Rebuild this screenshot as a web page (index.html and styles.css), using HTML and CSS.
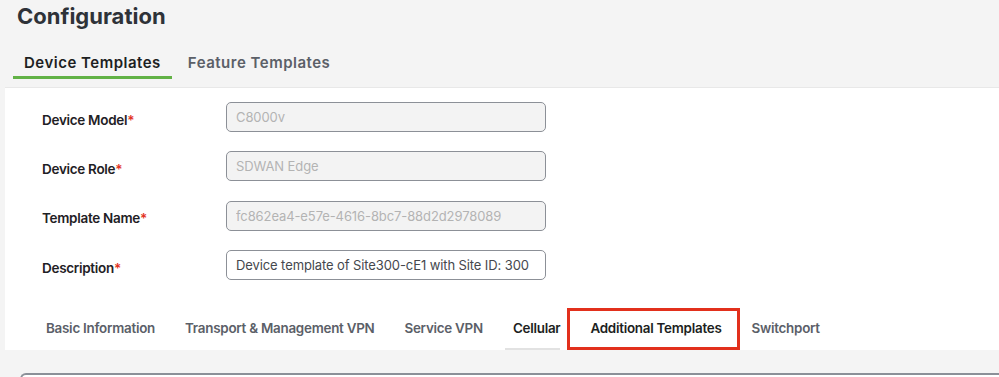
FILE: index.html
```html
<!DOCTYPE html>
<html lang="en">

<head>
    <meta charset="UTF-8">
    <meta name="viewport" content="width=device-width, initial-scale=1.0">
    <title>Configuration - Device Templates</title>
    <link rel="stylesheet" href="styles.css">
</head>

<body>
    <!-- Cabeçalho -->
    <header class="page-header">
        <h1 class="page-title">Configuration</h1>
        <nav class="top-tabs">
            <a href="#" class="top-tab active">Device Templates</a>
            <a href="#" class="top-tab">Feature Templates</a>
        </nav>
    </header>

    <!-- Formulário do template -->
    <main class="panel">
        <form class="template-form">
            <div class="form-row">
                <label for="device-model">Device Model<span class="req">*</span></label>
                <input type="text" id="device-model" value="C8000v" disabled>
            </div>
            <div class="form-row">
                <label for="device-role">Device Role<span class="req">*</span></label>
                <input type="text" id="device-role" value="SDWAN Edge" disabled>
            </div>
            <div class="form-row">
                <label for="template-name">Template Name<span class="req">*</span></label>
                <input type="text" id="template-name" value="fc862ea4-e57e-4616-8bc7-88d2d2978089" disabled>
            </div>
            <div class="form-row">
                <label for="description">Description<span class="req">*</span></label>
                <input type="text" id="description" value="Device template of Site300-cE1 with Site ID: 300">
            </div>
        </form>

        <nav class="section-tabs">
            <a href="#" class="section-tab">Basic Information</a>
            <a href="#" class="section-tab">Transport &amp; Management VPN</a>
            <a href="#" class="section-tab">Service VPN</a>
            <a href="#" class="section-tab visited">Cellular</a>
            <a href="#" class="section-tab active">Additional Templates<span class="highlight"></span></a>
            <a href="#" class="section-tab">Switchport</a>
        </nav>
    </main>

    <section class="section-box"></section>
</body>

</html>
```

FILE: styles.css
```css
/* Reset básico */
* {
    margin: 0;
    padding: 0;
    box-sizing: border-box;
    font-family: 'Inter', 'Liberation Sans', Arial, sans-serif;
}

:root {
    --fundo: #f4f4f4;
    --texto: #1d1f22;
    --texto-suave: #5b6068;
    --verde: #62b246;
    --roxo: #6361a8;
    --borda-input: #8c9097;
    --vermelho: #e2301c;
}

body {
    background-color: var(--fundo);
    color: var(--texto);
    overflow: hidden;
}

/* Cabeçalho */
.page-header {
    padding-left: 13px;
}

.page-title {
    font-size: 22px;
    line-height: 28px;
    font-weight: 700;
    color: #2e3238;
    padding: 2px 0 0 4px;
}

.top-tabs {
    display: flex;
    gap: 5px;
    margin-top: 23px;
}

.top-tab {
    font-size: 15px;
    line-height: 20px;
    font-weight: 600;
    letter-spacing: 0.5px;
    color: var(--texto-suave);
    text-decoration: none;
    padding: 0 11px 3px;
    border-bottom: 3px solid transparent;
}

.top-tab.active {
    color: var(--texto);
    border-bottom-color: var(--verde);
}

/* Painel branco */
.panel {
    margin: 8px 0 0 5px;
    background-color: #fff;
    border-top: 1px solid #e8e8e8;
    padding-top: 14px;
}

.template-form {
    padding-left: 37px;
}

.form-row {
    display: flex;
    align-items: center;
    height: 30px;
    margin-bottom: 19.4px;
}

.form-row:last-child {
    margin-bottom: 0;
}

.form-row label {
    width: 184px;
    font-size: 13.5px;
    line-height: 17px;
    font-weight: 600;
    letter-spacing: -0.3px;
    color: #1f2125;
    padding-top: 6px;
}

.req {
    color: var(--vermelho);
}

.form-row input {
    width: 320px;
    height: 30px;
    padding: 0 9px;
    border: 1.5px solid var(--borda-input);
    border-radius: 5px;
    font-size: 13px;
    letter-spacing: -0.1px;
    color: #45484d;
    background-color: #fff;
}

.form-row input:disabled {
    background-color: #f3f3f3;
    color: #b3b3b3;
}

/* Abas das seções */
.section-tabs {
    display: flex;
    gap: 22px;
    padding-left: 33px;
    margin-top: 27px;
}

.section-tab {
    position: relative;
    font-size: 13.4px;
    line-height: 18px;
    font-weight: 600;
    letter-spacing: -0.25px;
    color: var(--texto-suave);
    text-decoration: none;
    padding: 12px 0 11px 8px;
    border-bottom: 2px solid transparent;
}

.section-tab.visited {
    color: var(--texto);
    border-bottom-color: #e2e2e2;
}

.section-tab.active {
    color: var(--texto);
    border-bottom-color: var(--roxo);
}

.highlight {
    position: absolute;
    top: 1px;
    bottom: -2px;
    left: -15px;
    right: -18px;
    border: 3px solid var(--vermelho);
}

/* Caixa de baixo */
.section-box {
    margin: 23px 0 0 20px;
    height: 40px;
    border: 2px solid #8b9098;
    border-right: none;
    border-radius: 6px 0 0 0;
    background-color: #fff;
}
```
